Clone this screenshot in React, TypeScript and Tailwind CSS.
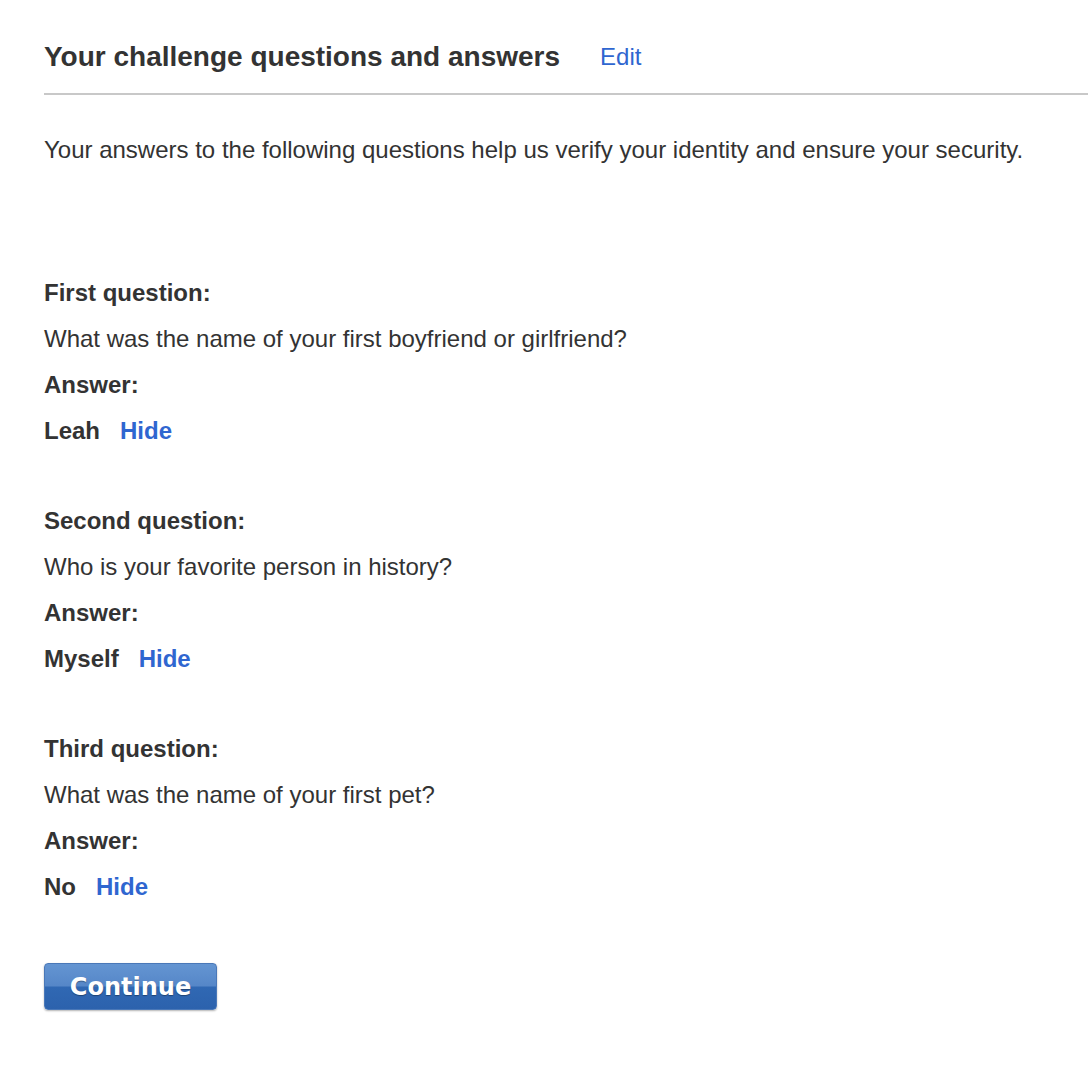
import React from "react";

const qa = [
  { label: "First question:", q: "What was the name of your first boyfriend or girlfriend?", a: "Leah" },
  { label: "Second question:", q: "Who is your favorite person in history?", a: "Myself" },
  { label: "Third question:", q: "What was the name of your first pet?", a: "No" },
];

export default function App() {
  return (
    <div className="min-h-[1080px] bg-white text-[#333333] pl-[44px] pt-[34px]" style={{ fontFamily: '"Liberation Sans", Arial, sans-serif' }}>
      <div className="flex items-center leading-[46px]">
        <h1 className="text-[28px] font-bold">Your challenge questions and answers</h1>
        <a className="ml-[40px] text-[24px] text-[#2f66d0]" href="#">Edit</a>
      </div>
      <div className="mt-[13px] h-[2px] bg-[#c8c8c8]" />
      <p className="mt-[32px] text-[24px] leading-[46px]">
        Your answers to the following questions help us verify your identity and ensure your security.
      </p>
      <div className="mt-[97px] flex flex-col gap-[44px]">
        {qa.map((item) => (
          <div key={item.label} className="flex flex-col text-[24px] leading-[46px]">
            <div className="font-bold">{item.label}</div>
            <div>{item.q}</div>
            <div className="font-bold">Answer:</div>
            <div className="flex">
              <span className="font-bold">{item.a}</span>
              <a href="#" className="ml-[20px] font-bold text-[#2f66d0]">Hide</a>
            </div>
          </div>
        ))}
      </div>
      <button
        className="mt-[53px] flex h-[47px] w-[173px] items-center justify-center rounded-[4px] border border-[#4a78b8] bg-[linear-gradient(to_bottom,#6495d2_0%,#5687c8_48%,#3068b3_52%,#2c62ad_100%)] text-[24px] font-bold text-white shadow-[0_1px_2px_rgba(0,0,0,0.3)] [text-shadow:0_1px_1px_rgba(0,0,0,0.35)]"
        style={{ fontFamily: '"DejaVu Sans", Verdana, sans-serif' }}
      >
        Continue
      </button>
    </div>
  );
}
